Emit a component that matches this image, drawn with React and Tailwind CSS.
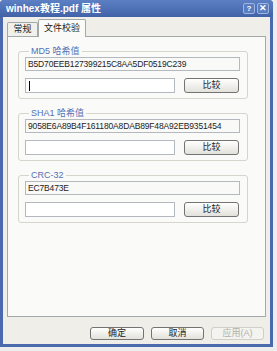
import React from "react";

function Btn({ children, disabled, className }) {
  return (
    <div
      className={
        "flex items-center justify-center rounded-[3px] border text-[9px] leading-none " +
        (disabled
          ? "border-[#cfcfc6] bg-[#f3f3ef] text-[#b0b0a8] "
          : "border-[#737373] bg-linear-to-b from-white to-[#e2e1da] text-[#222] ") +
        className
      }
    >
      {children}
    </div>
  );
}

function Group({ label, hash, cursor }) {
  return (
    <fieldset className="w-[230px] rounded-[3px] border border-[#d6d5cb] pl-[6px] pr-[7px] pb-[5px]">
      <legend className="ml-[4px] px-[2px] text-[9px] leading-[10px] text-[#5571b5]">{label}</legend>
      <div className="mt-[1px] flex h-[14px] items-center border border-[#b4b9bf] bg-[#f9f9f8] pl-[2px] text-[8.5px] leading-none tracking-[-0.15px] text-[#222]">
        {hash}
      </div>
      <div className="mt-[7px] flex h-[15px] items-stretch justify-between">
        <div className="flex w-[150px] items-center border border-[#b4b9bf] bg-white">
          {cursor && <span className="ml-[3px] h-[10px] w-px bg-black" />}
        </div>
        <Btn className="mr-[1px] w-[55px]">比较</Btn>
      </div>
    </fieldset>
  );
}

export default function App() {
  return (
    <div className="h-[351px] w-[277px] overflow-hidden bg-[#ededed] font-['Liberation_Sans','Noto_Sans_CJK_SC',sans-serif]">
      <div className="flex h-[347px] w-[273px] flex-col rounded-t-[4px] bg-[#4a6aad]">
        {/* title bar */}
        <div className="flex h-[17px] items-center justify-between rounded-t-[4px] bg-linear-to-b from-[#5d80c4] to-[#4162a6] pl-[6px] pr-[4px]">
          <span className="text-[10px] font-bold leading-none text-white">winhex教程.pdf 属性</span>
          <div className="flex gap-[2px]">
            <div className="flex h-[11px] w-[12px] items-center justify-center rounded-[2px] border border-[#9fb4de] bg-[#5a7cc0] text-[8px] font-bold leading-none text-white">?</div>
            <div className="flex h-[11px] w-[12px] items-center justify-center rounded-[2px] border border-[#9fb4de] bg-[#5a7cc0] text-[9px] font-bold leading-none text-white">✕</div>
          </div>
        </div>
        {/* body */}
        <div className="mx-[3px] mb-[3px] flex flex-1 flex-col bg-[#efeee9] px-[4px] pt-[2px]">
          {/* tabs */}
          <div className="flex h-[17px] items-end">
            <div className="flex h-[14px] w-[31px] items-center justify-center rounded-t-[2px] border border-b-0 border-[#a3a9ab] bg-[#f1f1ec] text-[9px] leading-none text-[#222]">
              常规
            </div>
            <div className="relative z-10 -mb-px flex h-[18px] w-[48px] items-center justify-center rounded-t-[2px] border border-b-0 border-[#a3a9ab] bg-[#fafaf8] text-[9px] leading-none text-[#222]">
              文件校验
            </div>
          </div>
          {/* pane */}
          <div className="flex h-[281px] flex-col gap-[9px] border border-[#a3a9ab] bg-[#fafaf8] pl-[10px] pt-[9px]">
            <Group label="MD5 哈希值" hash="B5D70EEB127399215C8AA5DF0519C239" cursor />
            <Group label="SHA1 哈希值" hash="9058E6A89B4F161180A8DAB89F48A92EB9351454" />
            <Group label="CRC-32" hash="EC7B473E" />
          </div>
          {/* bottom buttons */}
          <div className="flex justify-end gap-[7px] pr-[2px] pt-[10px]">
            <Btn className="h-[13px] w-[54px]">确定</Btn>
            <Btn className="h-[13px] w-[53px]">取消</Btn>
            <Btn disabled className="h-[13px] w-[53px]">应用(A)</Btn>
          </div>
        </div>
      </div>
    </div>
  );
}
